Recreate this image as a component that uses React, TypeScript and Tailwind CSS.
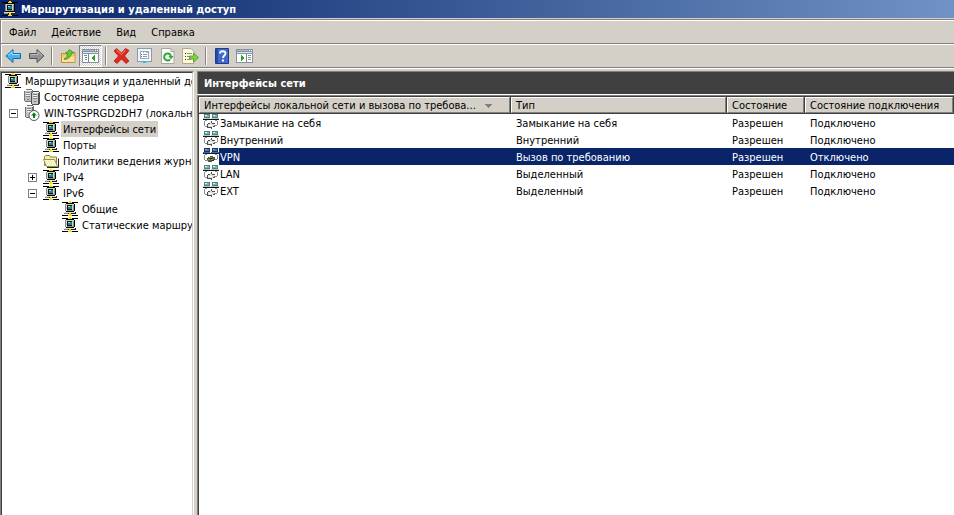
import type { ReactNode } from 'react';
import clsx from 'clsx';

type IconProps = { selected?: boolean };

/* ---------- Tree and title icons ---------- */

function NetworkIcon({ light }: { light?: boolean }) {
  return (
    <svg width="16" height="16" viewBox="0 0 16 16" shapeRendering="crispEdges" className="shrink-0">
      <path d="M0 1h16v1H0zM0 14h16v1H0z" fill="#000" />
      <path d="M7 0h2v1H7zM6 1h4v1H6zM7 13h2v1H7zM6 14h4v1H6z" fill="#f5e400" />
      {light && <path d="M3 2h10v9H3z" fill="#000" />}
      <path d="M4 2h8v1H4zM12 3h1v7h-1zM4 10h8v1H4z" fill="#000" />
      <path d="M3 3h1v7H3z" fill="#8a8a8a" />
      <path d="M4 3h8v7H4z" fill="#cfcfcf" />
      <path d="M11 4h1v6h-1zM5 9h7v1H5z" fill="#8f8f8f" />
      <path d="M5 4h5v5H5z" fill="#111" />
      <path d="M6 5h4v3H6z" fill="#168b80" />
      <path d="M6 5h2v1H6z" fill="#8fe8dc" />
      <path d="M2 11h11v1H2z" fill="#dcdcdc" />
      <path d="M13 11h1v2h-1zM3 12h10v1H3z" fill="#222" />
      <path d="M2 12h4v1H2z" fill="#888" />
      <path d="M7 12h2v1H7z" fill="#f5e400" />
    </svg>
  );
}

function ServersIcon() {
  return (
    <svg width="16" height="16" viewBox="0 0 16 16" shapeRendering="crispEdges" className="shrink-0">
      <path d="M2 0h6v1h1v12H1v-1H0V2h2z" fill="#757575" />
      <path d="M1 2h6v10H1z" fill="#c2c2c2" />
      <path d="M2 1h6v1H2zM2 4h4v1H2zM2 6h4v1H2z" fill="#f2f2f2" />
      <path d="M2 3h4v1H2zM2 5h4v1H2zM2 7h4v1H2z" fill="#858585" />
      <path d="M9 2h6v1h1v12h-1v1H8v-1H7V4h2z" fill="#505050" />
      <path d="M8 4h6v11H8z" fill="#c4c4c4" />
      <path d="M9 3h6v1H9zM9 6h4v1H9zM9 8h4v1H9z" fill="#f5f5f5" />
      <path d="M9 5h4v1H9zM9 7h4v1H9zM9 9h4v1H9z" fill="#808080" />
      <path d="M10 12h2v1h-2zM3 10h2v1H3z" fill="#777" />
    </svg>
  );
}

function LocalServerIcon() {
  return (
    <svg width="16" height="16" viewBox="0 0 16 16" className="shrink-0">
      <g shapeRendering="crispEdges">
        <path d="M3 0h6v1h1v12H2v-1H1V2h2z" fill="#707070" />
        <path d="M2 2h6v10H2z" fill="#c6c6c6" />
        <path d="M3 1h6v1H3zM3 4h4v1H3zM3 6h4v1H3z" fill="#f4f4f4" />
        <path d="M3 3h4v1H3zM3 5h4v1H3z" fill="#808080" />
      </g>
      <circle cx="10" cy="10.500" r="5" fill="#fff" stroke="#555" />
      <path d="M10 7.500l3 3h-2v2.500H9v-2.500H7z" fill="#0b7a1c" />
    </svg>
  );
}

function FolderIcon() {
  return (
    <svg width="16" height="16" viewBox="0 0 16 16" className="shrink-0">
      <path d="M1.500 12.500v-9l1-1h4l1 1.500h6v8.500z" fill="#f3efa8" stroke="#85813f" />
      <path d="M3.500 13.500l-3-7h11l3 7z" fill="#fbf9d4" stroke="#99954f" />
      <path d="M4 14.500h11.500v-9" fill="none" stroke="#222" />
      <path d="M3 8.500h8M4 10.500h8M5 12.500h8" stroke="#eee480" strokeDasharray="1 1" />
    </svg>
  );
}

function InterfaceIcon({ selected }: IconProps) {
  return (
    <svg width="16" height="16" viewBox="0 0 16 16" shapeRendering="crispEdges" className="shrink-0">
      <path d="M1 0h6v4H1zM9 0h6v4H9z" fill={selected ? '#1b3263' : '#6b7777'} />
      <path d="M2 1h4v2H2zM10 1h4v2h-4z" fill={selected ? '#2b83a0' : '#35d6c4'} />
      <path d="M2 1h2v1H2zM10 1h2v1h-2z" fill={selected ? '#7ea8c8' : '#d4fff8'} />
      <path d="M0 4h7v1H0zM8 4h8v1H8z" fill={selected ? '#53648c' : '#c4c4c4'} />
      <path d="M0 5h16v1H0z" fill={selected ? '#0a1c48' : '#111'} />
      <path d="M1 7h1v5H1zM2 6h2v1H2zM14 7h1v4h-1zM2 12h3v1H2zM11 11h3v1h-3zM12 6h2v1h-2z" fill="#8b8b8b" />
      {selected ? (
        <>
          <path d="M5 9h2V8h3v1h2v3h-1v1H9v1H5v-2H4v-2h1z" fill="#4f5a3a" />
          <path d="M6 9h3v1H6zM5 11h2v1H5zM8 11h2v1H8z" fill="#8c9663" />
          <path d="M7 10h2v1H7zM9 12h2v1H9z" fill="#1a2428" />
        </>
      ) : (
        <>
          <path d="M5 9h2V8h2v1h2v3h-1v1H9v1H7v-1H5z" fill="#dedede" />
          <path d="M8 7h1v2H8zM9 9h3v1H9zM4 10h1v4H4zM5 9h2v1H5zM10 12h2v1h-2zM8 13h1v2H8zM5 13h3v1H5z" fill="#4c4c4c" />
          <path d="M6 11h3v1H6z" fill="#fff" />
        </>
      )}
    </svg>
  );
}

/* ---------- Toolbar icons ---------- */

function ArrowIcon({ back }: { back?: boolean }) {
  return (
    <svg width="17" height="16" viewBox="0 0 17 16">
      <path
        d={back ? 'M1 8l7-6.500v4h7.500v5H8v4z' : 'M16 8L9 1.500v4H1.500v5H9v4z'}
        fill={back ? '#42b4ef' : '#929292'}
        stroke={back ? '#1769a8' : '#555'}
        strokeLinejoin="round"
      />
      <path
        d={back ? 'M3 7.500l4-3.800v2.800h7.500' : 'M2.500 6.500H10V3.700l4 3.800'}
        fill="none"
        stroke={back ? '#9fe0ff' : '#bebebe'}
      />
    </svg>
  );
}

function UpFolderIcon() {
  return (
    <svg width="16" height="16" viewBox="0 0 16 16">
      <path d="M1.500 14.500v-9h3l1-1h9.500v10z" fill="#f0c765" stroke="#bd9236" />
      <path d="M2 14v-4.500l3-1h9.500V14z" fill="#fce09a" />
      <path d="M4 10.500c2.500-.5 3.500-2 3.500-4.500h-2L9.500 1.500 14 5h-2.500c0 3.500-3 6-7 6.500z" fill="#62c63c" stroke="#318621" strokeWidth=".7" />
    </svg>
  );
}

function PaneIcon({ right }: { right?: boolean }) {
  return (
    <svg width="17" height="14" viewBox="0 0 17 14" shapeRendering="crispEdges">
      <path d="M0 0h17v14H0z" fill="#8792a0" />
      <path d="M1 1h11v1H1z" fill="#a9b8c6" />
      <path d="M13 1h1v1h-1zM15 1h1v1h-1z" fill="#fff" />
      <path d="M1 3h15v1H1z" fill="#dce4ea" />
      <path d="M1 5h15v8H1z" fill="#fff" />
      {right ? (
        <>
          <path d="M10 5h1v8h-1z" fill="#7c8995" />
          <path d="M12 6h3v1h-3zM12 8h3v1h-3zM12 10h3v1h-3z" fill="#7b94ad" />
          <path d="M5 6h1v1h1v1h1v2H7v1H6v1H5z" fill="#2aa02c" />
        </>
      ) : (
        <>
          <path d="M6 5h1v8H6z" fill="#7c8995" />
          <path d="M2 6h3v1H2zM3 8h2v1H3zM3 10h2v1H3z" fill="#5d8ec0" />
          <path d="M12 6h1v6h-1v-1h-1v-1h-1V8h1V7h1z" fill="#2aa02c" />
        </>
      )}
    </svg>
  );
}

function DeleteIcon() {
  return (
    <svg width="17" height="16" viewBox="0 0 17 16">
      <path
        d="M1 3l2.500-2.500 5 4.500 4-4.500 3.500 2L11.500 8l4.500 5-3 2.500-4.500-4.500L4 15.500 1 13l4.500-5z"
        fill="#e02a20"
        stroke="#b01c16"
        strokeWidth=".8"
        strokeLinejoin="round"
      />
      <path d="M3.500 2L8.500 6.500l4-4.500" fill="none" stroke="#f4897d" />
    </svg>
  );
}

function PropertiesIcon() {
  return (
    <svg width="16" height="16" viewBox="0 0 16 16" shapeRendering="crispEdges">
      <path d="M0 0h15v14H0z" fill="#8a9bac" />
      <path d="M1 1h13v12H1z" fill="#f3f6f9" />
      <path d="M3 3h9v8H3z" fill="#9aaaba" />
      <path d="M4 5h7v5H4z" fill="#fff" />
      <path d="M4 4h2v1H4zM7 4h2v1H7z" fill="#fff" />
      <path d="M4 6h1v1H4zM4 8h1v1H4z" fill="#3a7fc0" />
      <path d="M6 6h4v1H6zM6 8h4v1H6z" fill="#8a97a5" />
      <path d="M4 14h2v1H4zM9 14h2v1H9z" fill="#9fdcf6" />
      <path d="M6 13h3v2H6z" fill="#36b4ee" />
    </svg>
  );
}

function RefreshIcon() {
  return (
    <svg width="14" height="16" viewBox="0 0 14 16">
      <path d="M.5.5h9.500l3 3v12H.5z" fill="#fbfbfb" stroke="#a6a69e" />
      <path d="M10 .5v3h3" fill="#ddd" stroke="#a6a69e" />
      <path d="M9 11.500A3.500 3.500 0 1 1 10 8" fill="none" stroke="#2fa838" strokeWidth="2" />
      <path d="M7.500 8h5l-2.500 3.500z" fill="#2fa838" />
    </svg>
  );
}

function ExportIcon() {
  return (
    <svg width="17" height="16" viewBox="0 0 17 16">
      <path d="M.5.500h8.500l3 3v12H.5z" fill="#fdf9dc" stroke="#b3ab88" />
      <path d="M3 5.500h1M3 8.500h1M3 11.500h1" stroke="#333" />
      <path d="M5 5.500h5M5 8.500h4M5 11.500h4" stroke="#8f8c9c" />
      <path d="M7.500 8h4V5l5 4.500-5 4.500v-3h-4z" fill="#7ed43e" stroke="#43972a" strokeWidth=".8" />
    </svg>
  );
}

function HelpIcon() {
  return (
    <svg width="14" height="16" viewBox="0 0 14 16">
      <path d="M.5.500h13v15H.5z" fill="#4169cc" stroke="#1d3c8e" />
      <path d="M1 1h2v14H1z" fill="#274aa3" />
      <path d="M5 5.500C5 2.500 10.500 2.500 10.500 5.500 10.500 7.500 8 7.500 8 10" fill="none" stroke="#fff" strokeWidth="1.800" />
      <path d="M7 11.500h2v2H7z" fill="#fff" />
    </svg>
  );
}

/* ---------- Data ---------- */

const menuItems = ['Файл', 'Действие', 'Вид', 'Справка'];

type TreeNode = {
  label: string;
  icon: ReactNode;
  indent: string;
  expander?: 'plus' | 'minus';
  selected?: boolean;
};

const treeNodes: TreeNode[] = [
  { label: 'Маршрутизация и удаленный до', icon: <NetworkIcon />, indent: 'pl-[3px]' },
  { label: 'Состояние сервера', icon: <ServersIcon />, indent: 'pl-[22px]' },
  { label: 'WIN-TGSPRGD2DH7 (локально', icon: <LocalServerIcon />, indent: 'pl-[7px]', expander: 'minus' },
  { label: 'Интерфейсы сети', icon: <NetworkIcon />, indent: 'pl-[41px]', selected: true },
  { label: 'Порты', icon: <NetworkIcon />, indent: 'pl-[41px]' },
  { label: 'Политики ведения журна', icon: <FolderIcon />, indent: 'pl-[41px]' },
  { label: 'IPv4', icon: <NetworkIcon />, indent: 'pl-[26px]', expander: 'plus' },
  { label: 'IPv6', icon: <NetworkIcon />, indent: 'pl-[26px]', expander: 'minus' },
  { label: 'Общие', icon: <NetworkIcon />, indent: 'pl-[60px]' },
  { label: 'Статические маршрут', icon: <NetworkIcon />, indent: 'pl-[60px]' },
];

const columns = ['Интерфейсы локальной сети и вызова по требова...', 'Тип', 'Состояние', 'Состояние подключения'];

const interfaces = [
  { name: 'Замыкание на себя', type: 'Замыкание на себя', state: 'Разрешен', connection: 'Подключено' },
  { name: 'Внутренний', type: 'Внутренний', state: 'Разрешен', connection: 'Подключено' },
  { name: 'VPN', type: 'Вызов по требованию', state: 'Разрешен', connection: 'Отключено', selected: true },
  { name: 'LAN', type: 'Выделенный', state: 'Разрешен', connection: 'Подключено' },
  { name: 'EXT', type: 'Выделенный', state: 'Разрешен', connection: 'Подключено' },
];

/* ---------- Parts ---------- */

function ToolButton({ label, pressed, children }: { label: string; pressed?: boolean; children: ReactNode }) {
  return (
    <button
      type="button"
      aria-label={label}
      aria-pressed={pressed}
      className={clsx(
        'flex h-[22px] w-[23px] items-center justify-center border',
        pressed
          ? 'border-t-[#808080] border-l-[#808080] border-r-white border-b-white bg-[repeating-conic-gradient(#ffffff_0_25%,#d4d0c8_0_50%)] bg-[length:2px_2px]'
          : 'border-transparent'
      )}
    >
      {children}
    </button>
  );
}

function Separator() {
  return <div className="mx-[3px] h-[18px] w-[2px] border-l border-l-[#808080] border-r border-r-white" />;
}

function TreeRow({ node }: { node: TreeNode }) {
  return (
    <li className={clsx('flex h-4 items-center whitespace-nowrap', node.indent)}>
      {node.expander && (
        <button
          type="button"
          aria-label={node.expander === 'plus' ? 'Развернуть' : 'Свернуть'}
          className="mr-[6px] size-[9px] shrink-0"
        >
          <svg width="9" height="9" viewBox="0 0 9 9" shapeRendering="crispEdges" className="block">
            <path d="M0 0h9v9H0z" fill="#808080" />
            <path d="M1 1h7v7H1z" fill="#fff" />
            <path d="M2 4h5v1H2z" fill="#000" />
            {node.expander === 'plus' && <path d="M4 2h1v5H4z" fill="#000" />}
          </svg>
        </button>
      )}
      {node.icon}
      <span className={clsx('ml-[2px] px-[2px] pt-[2px] leading-[14px]', node.selected && 'bg-[#d4d0c8]')}>
        {node.label}
      </span>
    </li>
  );
}

function InterfaceTable() {
  return (
    <table className="w-full table-fixed border-separate border-spacing-0 text-left">
      <colgroup>
        <col className="w-[312px]" />
        <col className="w-[216px]" />
        <col className="w-[78px]" />
        <col />
      </colgroup>
      <thead>
        <tr>
          {columns.map((column, i) => (
            <th key={column} className="h-[17px] border-r border-b border-[#404040] bg-[#d4d0c8] p-0 font-normal">
              <button
                type="button"
                className="flex h-4 w-full items-center border border-t-white border-l-white border-r-[#808080] border-b-[#808080] pt-[2px] pl-1 text-left leading-3 whitespace-nowrap"
              >
                {column}
                {i === 0 && (
                  <svg width="7" height="4" viewBox="0 0 7 4" shapeRendering="crispEdges" className="ml-[9px]">
                    <path d="M0 0h7v1H6v1H5v1H4v1H3V3H2V2H1V1H0z" fill="#808080" />
                  </svg>
                )}
              </button>
            </th>
          ))}
        </tr>
      </thead>
      <tbody>
        {interfaces.map((row) => {
          const highlight = row.selected && 'bg-[#0a246a] text-white';
          const cell = clsx('h-[17px] p-0 pt-[2px] pl-[5px] leading-[15px]', highlight);
          return (
            <tr key={row.name} aria-selected={row.selected}>
              <td className="h-[17px] p-0 pl-1">
                <div className="flex h-[17px] items-start">
                  <InterfaceIcon selected={row.selected} />
                  <span className={clsx('grow pt-[2px] pl-px leading-[15px]', highlight)}>{row.name}</span>
                </div>
              </td>
              <td className={cell}>{row.type}</td>
              <td className={cell}>{row.state}</td>
              <td className={cell}>{row.connection}</td>
            </tr>
          );
        })}
      </tbody>
    </table>
  );
}

/**
 * Routing and Remote Access console window
 */
function App() {
  return (
    <div className='flex min-h-screen flex-col bg-[#d4d0c8] font-["DejaVu_Sans_Condensed","DejaVu_Sans",sans-serif] text-[11px] text-black'>
      {/* Title bar */}
      <header className="flex h-[18px] items-center bg-linear-to-r from-[#0a246a] to-[#7092c4] pl-[2px]">
        <NetworkIcon light />
        <h1 className="pt-[2px] pl-[3px] leading-4 font-bold text-white">Маршрутизация и удаленный доступ</h1>
      </header>

      {/* Menu bar */}
      <nav className="mt-px border-t border-l border-[#808080]">
        <div className="flex h-[23px] items-center border-t border-l border-white">
          {menuItems.map((item) => (
            <button key={item} type="button" className="pt-[2px] pr-2 pl-[7px] leading-4">
              {item}
            </button>
          ))}
        </div>
      </nav>

      {/* Toolbar */}
      <div role="toolbar" className="border-t border-b border-l border-[#808080]">
        <div className="flex h-[23px] items-center border-t border-l border-white">
          <ToolButton label="Назад"><ArrowIcon back /></ToolButton>
          <ToolButton label="Вперед"><ArrowIcon /></ToolButton>
          <Separator />
          <ToolButton label="На уровень вверх"><UpFolderIcon /></ToolButton>
          <ToolButton label="Дерево консоли" pressed><PaneIcon /></ToolButton>
          <Separator />
          <ToolButton label="Удалить"><DeleteIcon /></ToolButton>
          <ToolButton label="Свойства"><PropertiesIcon /></ToolButton>
          <ToolButton label="Обновить"><RefreshIcon /></ToolButton>
          <ToolButton label="Экспортировать список"><ExportIcon /></ToolButton>
          <Separator />
          <ToolButton label="Справка"><HelpIcon /></ToolButton>
          <ToolButton label="Панель действий"><PaneIcon right /></ToolButton>
        </div>
      </div>

      {/* Console tree and details */}
      <div className="flex grow border-t border-white pt-[2px]">
        <aside className="w-[194px] shrink-0 border border-t-[#808080] border-r-white border-b-0 border-l-[#808080]">
          <div className="h-full border border-t-[#404040] border-r-[#d4d0c8] border-b-0 border-l-[#404040] bg-white">
            <ul className="overflow-hidden">
              {treeNodes.map((node) => (
                <TreeRow key={node.label} node={node} />
              ))}
            </ul>
          </div>
        </aside>

        <main className="ml-[3px] flex min-w-0 grow flex-col">
          <h2 className="h-[23px] border-t border-l border-[#808080] bg-[#404040] pl-[6px] leading-6 font-bold text-white">
            Интерфейсы сети
          </h2>
          <div className="flex grow flex-col border-t border-white">
            <div className="flex grow flex-col border-t border-l border-[#808080]">
              <div className="grow border-t border-l border-[#404040] bg-white">
                <InterfaceTable />
              </div>
            </div>
          </div>
        </main>
      </div>
    </div>
  );
}

export default App;
